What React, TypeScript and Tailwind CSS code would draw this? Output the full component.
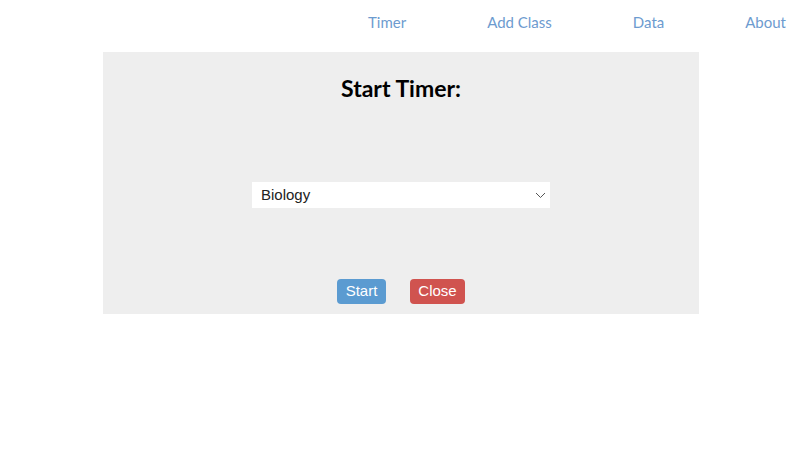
export default function App() {
  return (
    <div className="min-h-screen bg-white" style={{ fontFamily: 'Lato, "Open Sans", sans-serif' }}>
      <nav className="flex h-[44px] items-center justify-end gap-[81px] pr-[20px] text-[15px] text-[#6d9bcf]">
        <a href="#" className="leading-none">Timer</a>
        <a href="#" className="leading-none">Add Class</a>
        <a href="#" className="leading-none">Data</a>
        <a href="#" className="leading-none">About</a>
      </nav>

      <div className="ml-[103px] mt-[8px] flex h-[262px] w-[596px] flex-col items-center bg-[#eeeeee]">
        <h1 className="mt-[22px] text-[23px] font-bold leading-[28px] text-black">Start Timer:</h1>

        <div className="relative mt-[80px] h-[26px] w-[298px] bg-white">
          <select
            defaultValue="Biology"
            className="h-full w-full appearance-none bg-transparent pl-[9px] text-[15px] text-[#222] outline-none"
            style={{ fontFamily: '"Liberation Sans", Arial, sans-serif' }}
          >
            <option>Biology</option>
            <option>Chemistry</option>
            <option>Math</option>
          </select>
          <svg
            className="pointer-events-none absolute right-[4px] top-[10px]"
            width="11"
            height="7"
            viewBox="0 0 11 7"
            fill="none"
          >
            <path d="M1 1 L5.5 5.5 L10 1" stroke="#555" strokeWidth="1" />
          </svg>
        </div>

        <div
          className="mt-[71px] flex gap-[24px] text-[15px] text-white"
          style={{ fontFamily: '"Liberation Sans", Arial, sans-serif' }}
        >
          <button className="h-[25px] w-[49px] rounded-[4px] bg-[#5b9bd1]">Start</button>
          <button className="h-[25px] w-[55px] rounded-[4px] bg-[#d0534f]">Close</button>
        </div>
      </div>
    </div>
  );
}
